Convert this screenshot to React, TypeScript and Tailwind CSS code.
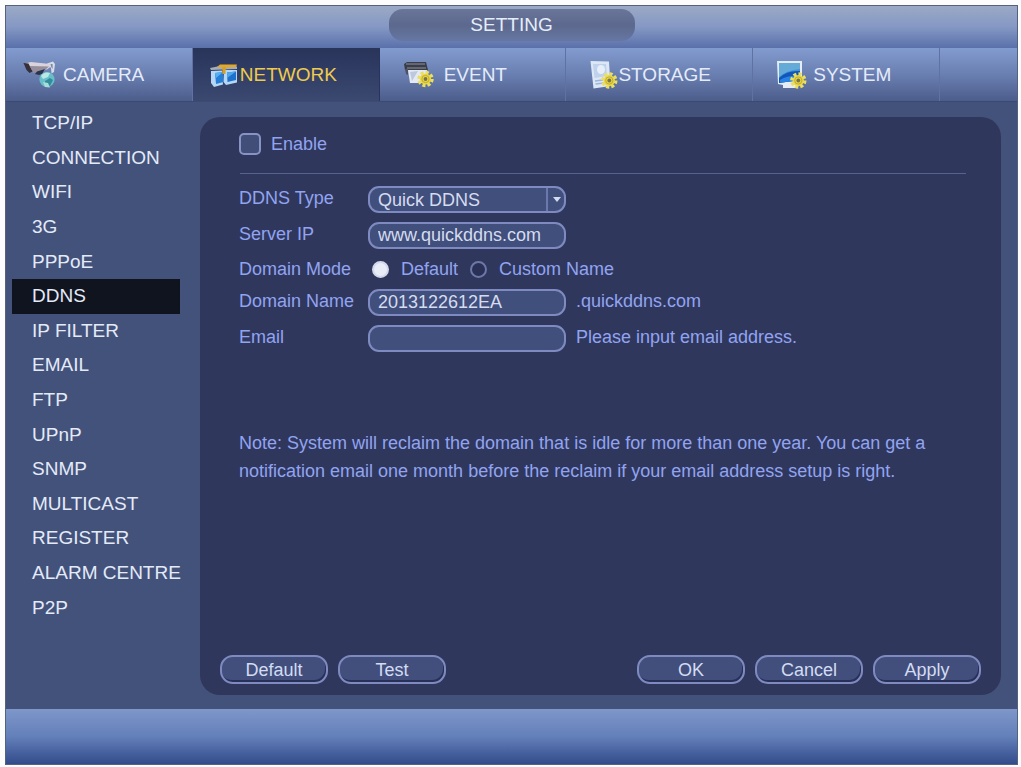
import { useState, type ReactNode } from 'react';

function Gear({ cx, cy }: { cx: number; cy: number }) {
  return (
    <g transform={`translate(${cx} ${cy})`}>
      <circle r="5.6" fill="#e6d648" />
      <circle r="6.6" fill="none" stroke="#ecdf5c" strokeWidth="3.2" strokeDasharray="3.1 2.08" />
      <circle r="3.6" fill="none" stroke="#c3a92a" strokeWidth="0.9" />
      <circle r="1.9" fill="#77734c" />
    </g>
  );
}

function CameraIcon() {
  return (
    <svg width="34" height="30" viewBox="0 0 34 30" aria-hidden="true">
      <path d="M24 3.5 L30 1.5 L32 4 L31 12 L28.5 13.5 L28 8 Z" fill="#d5dbe8" />
      <path d="M27 4.5 L29.5 4 L29.5 9 Z" fill="#6b7796" />
      <path d="M2 3.5 L8 2 L27 4 L28.5 6 L24 9.5 L9 10 L6 9.5 Z" fill="#d9d4dc" />
      <path d="M7 6 L26 6.5 L21 11 L10 13 Z" fill="#968e9c" />
      <path d="M0.5 3 L5.5 3.5 L9.5 11.5 L6.5 13 L3.5 10 Z" fill="#35303a" />
      <path d="M14 11.5 L22 9 L19 14 L16 15 L12 14 Z" fill="#28344c" />
      <circle cx="24" cy="19.5" r="7.6" fill="#68bfc9" />
      <path d="M18 16 Q21 11 27 13 L25 17 L20 19 Z" fill="#b9e8e6" />
      <path d="M22 21 L27 18 L30 20 L27 26 L22 25 Z" fill="#348c9d" />
      <path d="M20 22 L22 27 L27 27.5 L25 23 Z" fill="#a7ddd9" />
    </svg>
  );
}

function NetworkIcon() {
  return (
    <svg width="28" height="28" viewBox="0 0 28 28" aria-hidden="true">
      <path d="M0 7 L10 5 L27 5.5 L27 8 L1 9 Z" fill="#a5adb9" />
      <path d="M10 3.5 L27 3.5 L26 6 L15.5 6.5 L15.5 11 L12.5 11 L13 6.5 L7 6 Z" fill="#e5aa24" />
      <path d="M1 10 L12 9.5 L13 23.5 L4 26 L1 22 Z" fill="#b6d6f5" />
      <path d="M5 12 L13 11 L13.5 21 L6 23 Z" fill="#237fd8" />
      <path d="M5 12 L13 11 L6 17 Z" fill="#55b0f1" />
      <path d="M14 9 L27 9 L27 21.5 L16 24 L13.5 21 Z" fill="#b6d6f5" />
      <path d="M17 11.5 L26 10.5 L26 19 L17.5 21 Z" fill="#1d72cd" />
      <path d="M17 11.5 L26 10.5 L17.2 17 Z" fill="#4fa6ec" />
      <path d="M12.5 6 H15.5 V13 H12.5 Z" fill="#d99f25" />
    </svg>
  );
}

function EventIcon() {
  return (
    <svg width="32" height="30" viewBox="0 0 32 30" aria-hidden="true">
      <path d="M0 4 L3 2 L22 2 L24 10 L1 10 Z" fill="#393d49" />
      <path d="M2 4 H21 M3 8 H22" stroke="#8f939e" strokeWidth="1" />
      <path d="M1 9 L4 9 L4 15 L2 14 Z" fill="#4d5363" />
      <path d="M4 10 L23 10 L21 23 L6 23 Z" fill="#e5e9f2" />
      <path d="M6 12 L14 11 L8 21 Z" fill="#bcc8de" />
      <Gear cx={21.5} cy={19} />
    </svg>
  );
}

function StorageIcon() {
  return (
    <svg width="28" height="30" viewBox="0 0 28 30" aria-hidden="true">
      <path d="M0.5 1 L19 1.5 L20.5 26 L3.5 28.5 Z" fill="#dce7f6" />
      <path d="M3 4 L16 4 L17 16 L4.5 18 Z" fill="#c0d1ec" />
      <ellipse cx="11" cy="9.5" rx="4" ry="4.5" fill="#e6eef9" />
      <path d="M5 21 L13 20 M5.5 24 L14 23" stroke="#9db3d9" strokeWidth="1.3" />
      <Gear cx={19.3} cy={20.5} />
    </svg>
  );
}

function SystemIcon() {
  return (
    <svg width="30" height="30" viewBox="0 0 30 30" aria-hidden="true">
      <path d="M0 1 H25 V22 L20 28 H6 V25 L1 24 Z" fill="#e6ecf4" />
      <path d="M2 3 H23 V20 L2 23 Z" fill="#3f94d2" />
      <path d="M2 3 H23 V9 Q10 10 2 17 Z" fill="#65abd8" />
      <path d="M2 18 Q10 10 23 11 V20 L2 23 Z" fill="#1156bd" />
      <path d="M3 20 Q12 15 21 16 L18 21 L3 22.5 Z" fill="#2884e0" />
      <Gear cx={21.3} cy={20.5} />
    </svg>
  );
}

type Tab = { name: string; icon: ReactNode; slot: string };

const tabs: Tab[] = [
  { name: 'CAMERA', icon: <CameraIcon />, slot: 'pl-[17px] [&>span]:w-10' },
  { name: 'NETWORK', icon: <NetworkIcon />, slot: 'pl-[17px] [&>span]:w-[30px]' },
  { name: 'EVENT', icon: <EventIcon />, slot: 'pl-6 [&>span]:w-10' },
  { name: 'STORAGE', icon: <StorageIcon />, slot: 'pl-6 [&>span]:w-[28px]' },
  { name: 'SYSTEM', icon: <SystemIcon />, slot: 'pl-6 [&>span]:w-9' },
];

const menu = [
  'TCP/IP', 'CONNECTION', 'WIFI', '3G', 'PPPoE', 'DDNS', 'IP FILTER', 'EMAIL',
  'FTP', 'UPnP', 'SNMP', 'MULTICAST', 'REGISTER', 'ALARM CENTRE', 'P2P',
];

const field =
  'h-[27px] w-full appearance-none rounded-[11px] border-2 border-[#7f8bc0] bg-[#414f7d] pl-2 text-[18px] leading-[22px] text-[#d5dcef] outline-none';

const radio =
  'size-[17px] shrink-0 appearance-none rounded-full border-2 border-[#6c78a8] bg-[#2b3156] checked:border-[#d3d9ea] checked:bg-[#e9edf7]';

function ActionButton({ children }: { children: ReactNode }) {
  return (
    <button
      type="button"
      className="h-[29px] w-[108px] rounded-[13px] border-2 border-[#7f8bc0] bg-[#424f7d] text-[18px] leading-6 text-[#d3dcf2] shadow-[inset_-1px_-2px_0_#293058]"
    >
      {children}
    </button>
  );
}

export default function App() {
  const [page, setPage] = useState('DDNS');
  const [mode, setMode] = useState('default');

  return (
    <div className="flex min-h-screen flex-col bg-[#fdfdfe] pt-[5px] pr-[3px] pb-[2px] pl-[5px] font-['Liberation_Sans',Arial,sans-serif] text-[18px] leading-[22px]">
      <div className="flex grow flex-col border border-[#56617f] bg-[#43527b]">
        <header className="flex h-[42px] items-center justify-center bg-linear-to-b from-[#9aa9c5] via-[#8598c4] via-50% to-[#5a70aa] pb-1">
          <h1 className="flex h-8 w-[246px] items-center justify-center rounded-[14px] bg-linear-to-b from-[#69769a] via-[#5c688d] to-[#6677a3] text-[19px] text-[#e6edfa]">
            SETTING
          </h1>
        </header>

        <nav
          aria-label="Sections"
          className="grid h-[53px] grid-cols-[187fr_187fr_187fr_187fr_187fr_77fr] bg-linear-to-b from-[#829bcf] via-[#6a7fb1] via-50% to-[#4c5d8b] text-[19px]"
        >
          {tabs.map((tab) => (
            <button
              key={tab.name}
              type="button"
              className={`flex items-center border-r ${tab.slot} ${
                tab.name === 'NETWORK'
                  ? 'border-[#28345a] bg-linear-to-b from-[#28345a] to-[#3b4870] text-[#efcb4e]'
                  : 'border-[#5f72a3] text-[#e4ecfa]'
              }`}
            >
              <span className="shrink-0">{tab.icon}</span>
              {tab.name}
            </button>
          ))}
        </nav>

        <div className="flex grow border-t border-[#3b4a73]">
          <nav
            aria-label="Network settings"
            className="flex w-[194px] shrink-0 flex-col pt-1 pr-5 pb-[84px] pl-1.5 text-[19px]"
          >
            {menu.map((item) => (
              <button
                key={item}
                type="button"
                onClick={() => setPage(item)}
                className={`grow basis-0 pl-5 text-left whitespace-nowrap text-[#e3eaf8] ${
                  item === page ? 'bg-[#10141f]' : ''
                }`}
              >
                {item}
              </button>
            ))}
          </nav>

          <main className="mt-[15px] mr-4 mb-3.5 flex grow flex-col rounded-[20px] bg-[#30375c] px-5 pt-4 pb-[11px] text-[#91a4f2]">
            <div className="mr-[15px] ml-[19px] flex h-10 items-start">
              <label className="flex items-center gap-2.5">
                <input
                  type="checkbox"
                  className="size-[22px] appearance-none rounded-[5px] border-2 border-[#8793c4] bg-[#414e78] checked:bg-[#d3dcf2]"
                />
                Enable
              </label>
            </div>
            <hr className="mr-[15px] ml-5 border-[#56628f]" />

            <div className="mt-3 ml-[19px] grid grid-cols-[129px_198px_auto] items-center justify-start gap-y-[9px]">
              <label htmlFor="type" className="pb-1">DDNS Type</label>
              <div className="relative">
                <select id="type" className={field}>
                  <option>Quick DDNS</option>
                </select>
                <span className="pointer-events-none absolute inset-y-0.5 right-0 flex w-5 items-center justify-center border-l-2 border-[#6c78ad]">
                  <svg width="8" height="5" viewBox="0 0 8 5" aria-hidden="true">
                    <path d="M0 0 H8 L4 5 Z" fill="#d5dcef" />
                  </svg>
                </span>
              </div>
              <span />

              <label htmlFor="server" className="pb-1">Server IP</label>
              <input id="server" className={field} defaultValue="www.quickddns.com" />
              <span />

              <span id="mode">Domain Mode</span>
              <div
                role="radiogroup"
                aria-labelledby="mode"
                className="col-span-2 flex h-[22px] items-center gap-3 pl-1"
              >
                <label className="flex items-center gap-3">
                  <input
                    type="radio"
                    name="mode"
                    className={radio}
                    checked={mode === 'default'}
                    onChange={() => setMode('default')}
                  />
                  Default
                </label>
                <label className="flex items-center gap-3">
                  <input
                    type="radio"
                    name="mode"
                    className={radio}
                    checked={mode === 'custom'}
                    onChange={() => setMode('custom')}
                  />
                  Custom Name
                </label>
              </div>

              <label htmlFor="domain" className="pb-1">Domain Name</label>
              <input id="domain" className={field} defaultValue="2013122612EA" />
              <span className="pb-1 pl-2.5">.quickddns.com</span>

              <label htmlFor="email" className="pb-1">Email</label>
              <input id="email" type="email" className={field} />
              <span className="pb-1 pl-2.5">Please input email address.</span>
            </div>

            <p className="mt-[77px] ml-[19px] leading-7">
              Note: System will reclaim the domain that is idle for more than one year. You can get a{' '}
              <br />
              notification email one month before the reclaim if your email address setup is right.
            </p>

            <div className="mt-auto flex justify-between">
              <div className="flex gap-2.5">
                <ActionButton>Default</ActionButton>
                <ActionButton>Test</ActionButton>
              </div>
              <div className="flex gap-2.5">
                <ActionButton>OK</ActionButton>
                <ActionButton>Cancel</ActionButton>
                <ActionButton>Apply</ActionButton>
              </div>
            </div>
          </main>
        </div>

        <footer className="h-[55px] bg-linear-to-b from-[#7f97ca] via-[#6480ba] via-50% to-[#334b8a]" />
      </div>
    </div>
  );
}
